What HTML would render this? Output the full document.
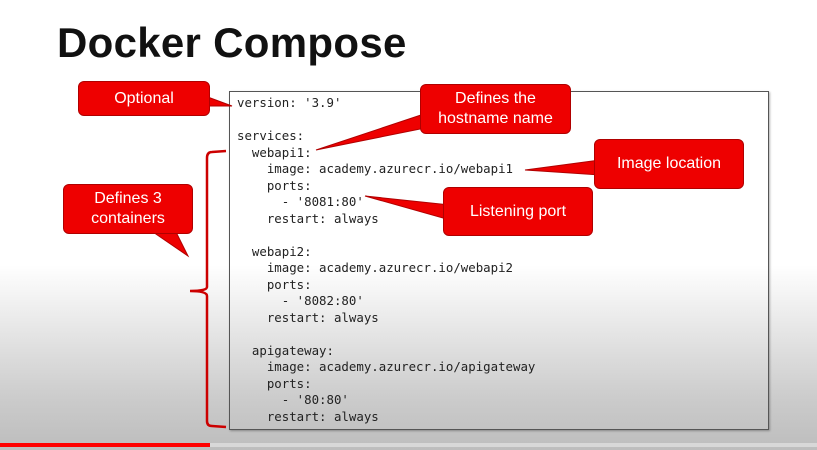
<!DOCTYPE html>
<html><head><meta charset="utf-8"><style>
html,body{margin:0;padding:0}
body{width:817px;height:450px;position:relative;overflow:hidden;font-family:"Liberation Sans",sans-serif;
background:linear-gradient(to bottom,#fff 0,#fff 265px,#e6e6e6 330px,#cbcbcb 400px,#bdbdbd 450px);}
h1{position:absolute;left:57px;top:19px;margin:0;font-size:42px;font-weight:bold;color:#111;letter-spacing:0.3px}
.box{position:absolute;left:229px;top:91px;width:540px;height:339px;border:1.5px solid #555;box-sizing:border-box;box-shadow:1px 1px 2px rgba(0,0,0,.3)}
pre{position:absolute;left:237px;top:95px;margin:0;font-family:"DejaVu Sans Mono","Liberation Mono",monospace;font-size:12.4px;line-height:16.5px;color:#222}
.c{position:absolute;background:#ee0000;border:1.5px solid #b00000;border-radius:6px;color:#fff;font-size:16px;text-align:center;display:flex;align-items:center;justify-content:center;line-height:20px;box-sizing:border-box}
svg{position:absolute;left:0;top:0}
.bar{position:absolute;top:443px;height:4px}
</style></head><body>
<h1>Docker Compose</h1>
<div class="box"></div>
<pre>version: '3.9'

services:
  webapi1:
    image: academy.azurecr.io/webapi1
    ports:
      - '8081:80'
    restart: always

  webapi2:
    image: academy.azurecr.io/webapi2
    ports:
      - '8082:80'
    restart: always

  apigateway:
    image: academy.azurecr.io/apigateway
    ports:
      - '80:80'
    restart: always</pre>
<svg width="817" height="450">
<g fill="#ee0000" stroke="#b00000" stroke-width="1">
<polygon points="205,96 232,106 205,106"/>
<polygon points="430,112 316,150 445,124"/>
<polygon points="600,160 525,170 600,175"/>
<polygon points="450,205 365,196 450,220"/>
<polygon points="150,230 188,256 175,230"/>
</g>
<path d="M226,151 L212,152 Q207,152 207,158 L207,287 Q207,291 190,291 Q207,291 207,296 L207,421 Q207,426 212,426 L226,427" fill="none" stroke="#cc0000" stroke-width="2.5"/>
</svg>
<div class="c" style="left:78px;top:81px;width:132px;height:35px">Optional</div>
<div class="c" style="left:420px;top:84px;width:151px;height:50px">Defines the<br>hostname name</div>
<div class="c" style="left:594px;top:139px;width:150px;height:50px">Image location</div>
<div class="c" style="left:443px;top:187px;width:150px;height:49px">Listening port</div>
<div class="c" style="left:63px;top:184px;width:130px;height:50px">Defines 3<br>containers</div>
<div class="bar" style="left:0;width:817px;background:#d8d8d8"></div>
<div class="bar" style="left:0;width:210px;background:#f00"></div>
</body></html>
